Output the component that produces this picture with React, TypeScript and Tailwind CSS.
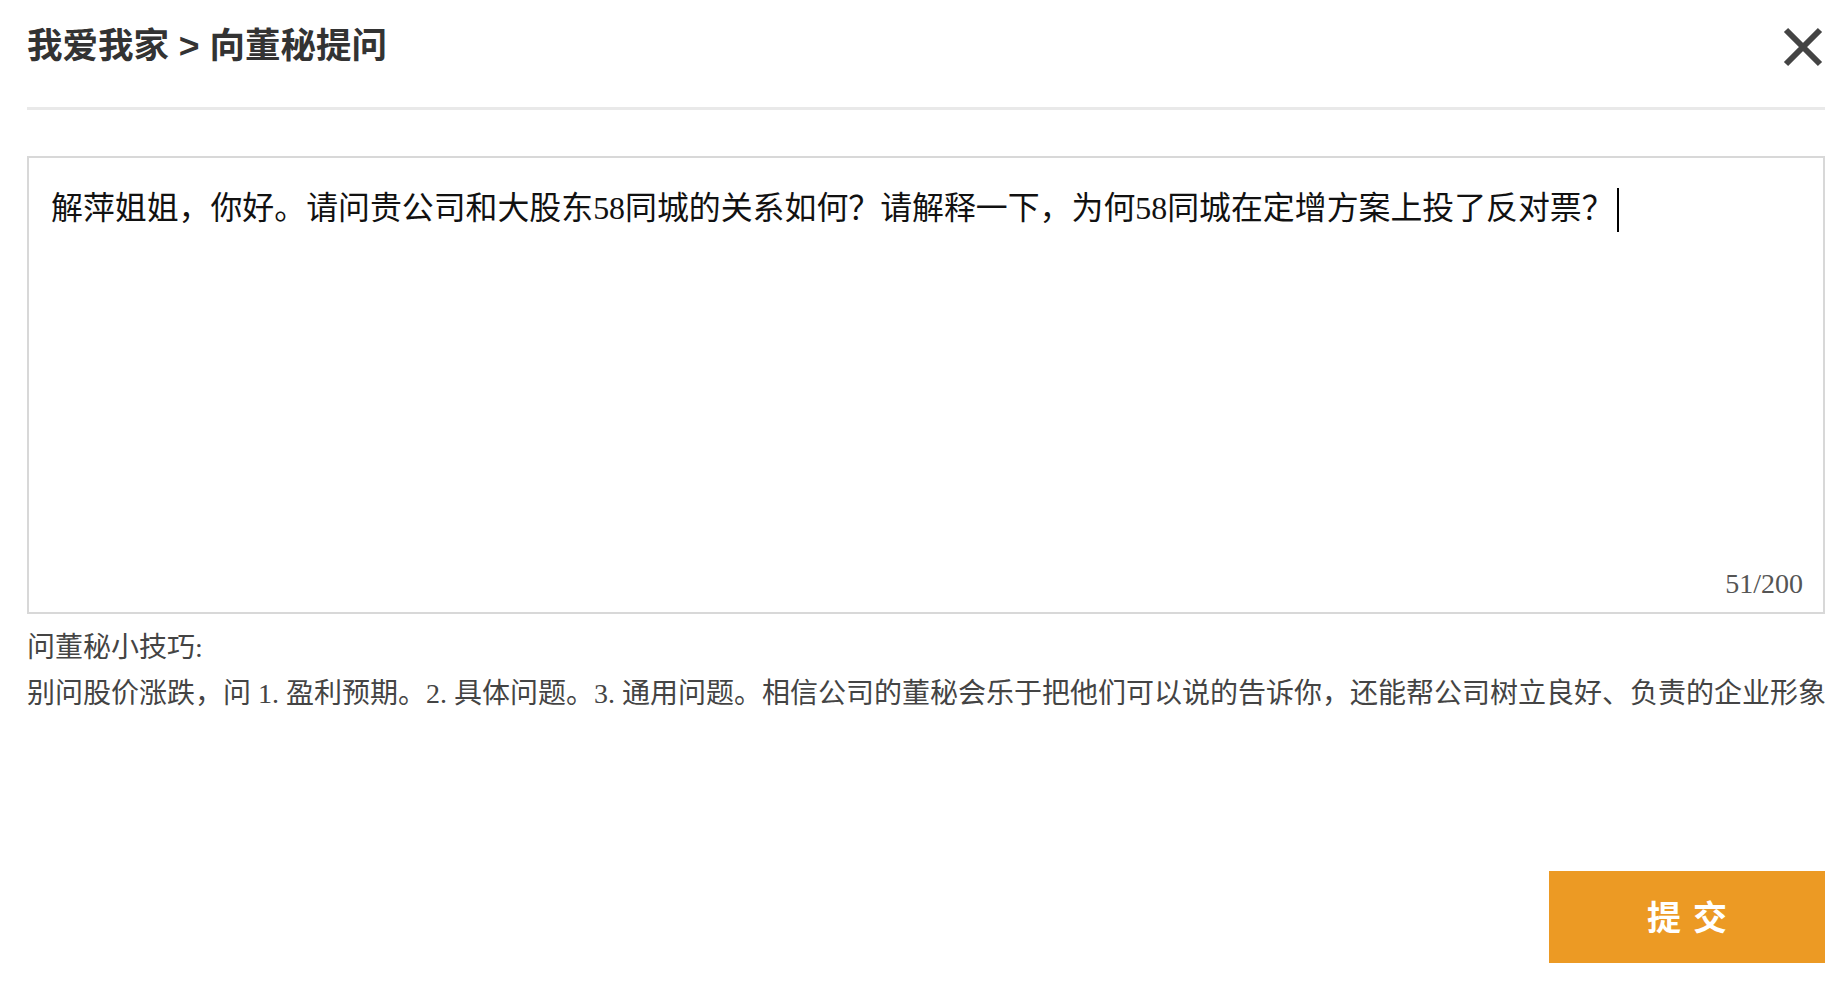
import { useState } from 'react'

const QUESTION =
  '解萍姐姐，你好。请问贵公司和大股东58同城的关系如何？请解释一下，为何58同城在定增方案上投了反对票？'

export default function App() {
  const [text] = useState(QUESTION)

  return (
    <div className="w-full h-[982px] bg-white pl-[27px] pr-[23px] flex flex-col font-['Liberation_Serif','Noto_Sans_CJK_SC',serif]">
      {/* header */}
      <div className="h-[94px] flex items-center justify-between">
        <h1 className="text-[35.5px] font-bold text-[#333] font-['Liberation_Sans','Noto_Sans_CJK_SC',sans-serif]">
          我爱我家 &gt; 向董秘提问
        </h1>
        <button className="w-[40px] h-[40px] mr-[2px] flex items-center justify-center">
          <svg width="40" height="40" viewBox="0 0 40 40">
            <path d="M3 3 L37 37 M37 3 L3 37" stroke="#444" strokeWidth="6" fill="none" />
          </svg>
        </button>
      </div>
      <div className="mt-[13px] h-[3px] bg-[#e9e9e9]" />

      {/* question box */}
      <div className="mt-[46px] h-[458px] border-2 border-[#d8d8d8] flex flex-col justify-between pl-[22px] pr-[20px] pt-[28px] pb-[12px]">
        <p className="text-[31.9px] leading-[45px] text-[#111]">
          {text}
          <span className="inline-block align-middle w-[2px] h-[44px] bg-black ml-[3px] -mt-[4px]" />
        </p>
        <div className="text-right text-[28px] leading-[32px] text-[#555]">{text.length}/200</div>
      </div>

      {/* tips */}
      <div className="mt-[11px] text-[28px] leading-[46px] text-[#444]">
        <p>问董秘小技巧:</p>
        <p className="whitespace-nowrap">
          别问股价涨跌，问 1. 盈利预期。2. 具体问题。3. 通用问题。相信公司的董秘会乐于把他们可以说的告诉你，还能帮公司树立良好、负责的企业形象
        </p>
      </div>

      <div className="mt-[154px] flex justify-end">
        <button className="w-[276px] h-[92px] bg-[#ec9a24] text-white text-[34px] font-bold tracking-[12px] pl-[12px] pt-[3px] font-['Liberation_Serif','Noto_Sans_CJK_SC',serif]">
          提交
        </button>
      </div>
    </div>
  )
}
